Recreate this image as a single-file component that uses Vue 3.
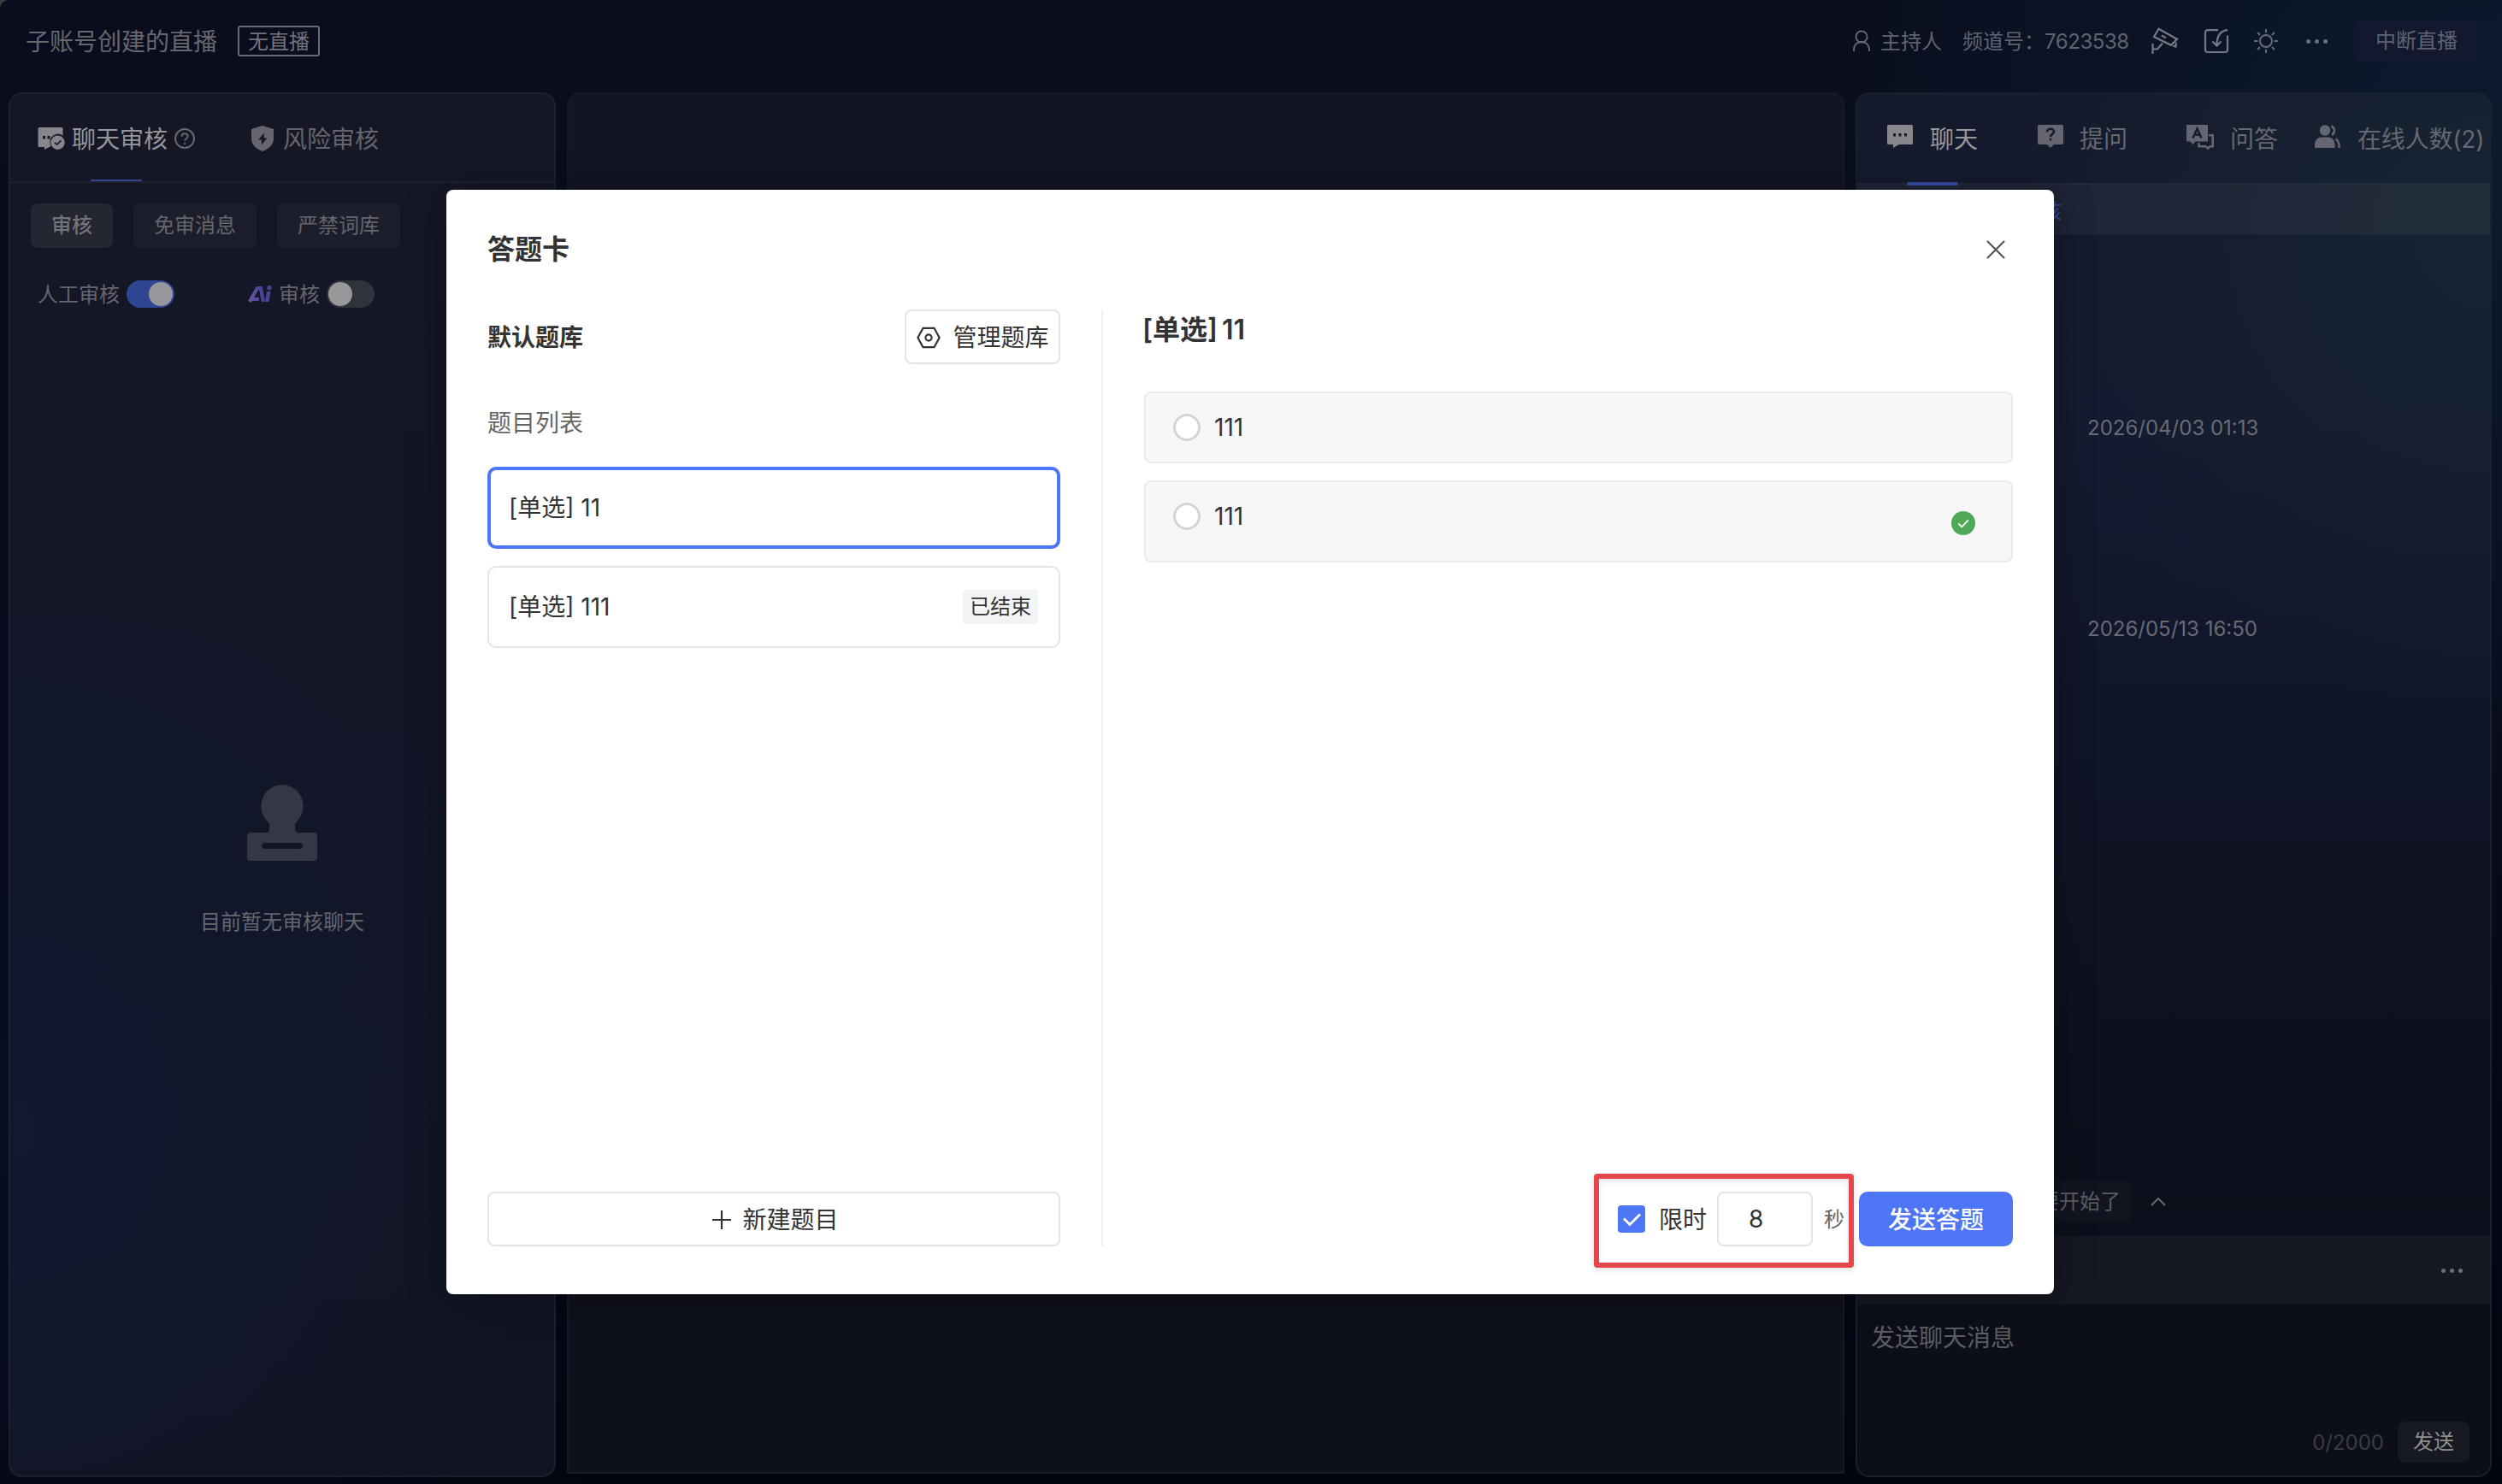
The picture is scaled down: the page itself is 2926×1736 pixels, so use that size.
<template>
  <div class="console">
    <header class="topbar">
      <h1 class="channel-name">子账号创建的直播</h1>
      <span class="live-state">无直播</span>
      <div class="topbar-right">
        <svg class="ic-host" viewBox="0 0 20 26" width="20" height="26">
          <circle cx="10" cy="8" r="6.6" />
          <path d="M1 25v-2.500c0-5 4-8.500 9-8.500s9 3.500 9 8.500V25" />
        </svg>
        <span class="host">主持人</span>
        <span class="channel-id">频道号：<i>7623538</i></span>
        <svg class="ic-line ic-camera" viewBox="0 0 32 32" width="32" height="32">
          <path d="M8.500 1.800 30 13.800l-7 7L3 11z" />
          <path d="m12 9.500 5 3" />
          <path d="M1.500 19v12M1.500 25.500h5.500l6-7M25 21.500l3.500 1 .5-5" />
        </svg>
        <svg class="ic-line ic-import" viewBox="0 0 30 30" width="30" height="30">
          <path d="M17 2.200H5a3 3 0 0 0-3 3V25a3 3 0 0 0 3 3h20a3 3 0 0 0 3-3V8.500" />
          <path d="M28 2.200C19 3 15.500 9 15.500 20M10.500 15.500l5 5 5-5" />
        </svg>
        <svg class="ic-line ic-sun" viewBox="0 0 28 28" width="28" height="28">
          <circle cx="14" cy="14" r="7" />
          <path d="M14 0v4.500M14 23.500V28M0 14h4.500M23.500 14H28M4 4l3 3M21 21l3 3M24 4l-3 3M7 21l-3 3" />
        </svg>
        <span class="dots"><b></b><b></b><b></b></span>
        <button class="btn-stop">中断直播</button>
      </div>
    </header>

    <main class="workspace">
      <section class="panel panel-audit">
        <nav class="audit-tabs">
          <div class="audit-tab active">
            <svg viewBox="0 0 32 28" width="32" height="28">
              <path class="solid" fill-rule="evenodd" d="M2 1h26a1.500 1.500 0 0 1 1.500 1.500v8.200a9.300 9.300 0 0 0-14.800 9.500A9.300 9.300 0 0 0 15.500 23L8 27v-3H2a1.500 1.500 0 0 1-1.500-1.500v-20A1.500 1.500 0 0 1 2 1zM6 11v3.400h3V11zm5.500 0v3.400h3V11z" />
              <path class="solid" fill-rule="evenodd" d="M23.500 10.500a8.200 8.200 0 1 1 0 16.400 8.200 8.200 0 0 1 0-16.400zm-4.200 8.600 3.300 3.200 5.400-5.300-1.200-1.200-4.200 4.100-2.100-2z" />
            </svg>
            <span>聊天审核</span>
            <svg class="ic-help" viewBox="0 0 24 24" width="24" height="24">
              <circle cx="12" cy="12" r="11" />
              <path d="M8.500 9.800c0-4.600 7.200-4.600 7.200-.3 0 2.800-3.700 2.600-3.700 5.300M12 17v2" />
            </svg>
          </div>
          <div class="audit-tab">
            <svg viewBox="0 0 28 30" width="28" height="30">
              <path class="solid" fill-rule="evenodd" d="M14 0l13 4v11c0 7.500-5.500 12-13 15C6.500 27 1 22.500 1 15V4zm1.800 8.500L9 16.400h4v5.800l6.500-7.800h-3.700z" />
            </svg>
            <span>风险审核</span>
          </div>
        </nav>
        <div class="pills">
          <button
            v-for="(name, i) in pills"
            :key="name"
            class="pill"
            :class="{ active: i === 0 }"
          >{{ name }}</button>
        </div>
        <div class="switches">
          <span class="sw-label">人工审核</span>
          <span class="switch on"></span>
          <svg class="ic-ai" viewBox="0 0 28 20" width="28" height="20">
            <defs>
              <linearGradient id="ai" x1="0" y1="0" x2="1" y2="0">
                <stop offset="0" stop-color="#66559a" />
                <stop offset="1" stop-color="#45409a" />
              </linearGradient>
            </defs>
            <g fill="none" stroke="url(#ai)" stroke-width="4.200">
              <path d="M2 19 11 3h4l3 16M4 16h9" />
            </g>
            <g fill="#4b4399">
              <path d="M22 7h4.500l-2 12H20z" />
              <circle cx="25" cy="2.800" r="2.700" />
            </g>
          </svg>
          <span class="sw-label">审核</span>
          <span class="switch"></span>
        </div>
        <div class="empty">
          <svg viewBox="0 0 82 90" width="82" height="90">
            <path fill-rule="evenodd" d="M41 0a25 25 0 0 1 17.500 42.500c-2 1.700-2.500 2.800-2.500 5V52q0 4 4 4h18a4 4 0 0 1 4 4v25a4 4 0 0 1-4 4H4a4 4 0 0 1-4-4V60a4 4 0 0 1 4-4h18q4 0 4-4v-4.500c0-2.200-.5-3.300-2.500-5A25 25 0 0 1 41 0zM20.500 68a3.500 3.500 0 0 0 0 7h41a3.500 3.500 0 0 0 0-7z" />
          </svg>
          <p>目前暂无审核聊天</p>
        </div>
      </section>

      <section class="panel panel-stage"></section>

      <section class="panel panel-chat">
        <nav class="chat-tabs">
          <div class="chat-tab active">
            <svg viewBox="0 0 30 28" width="30" height="28">
              <path class="solid" fill-rule="evenodd" d="M1.500 0h27A1.500 1.500 0 0 1 30 1.500v20a1.500 1.500 0 0 1-1.500 1.500H14l-7 4v-4H1.500A1.500 1.500 0 0 1 0 21.500v-20A1.500 1.500 0 0 1 1.500 0zM7 10v3.400h3V10zm6.500 0v3.400h3V10zm6.500 0v3.400h3V10z" />
            </svg>
            <span>聊天</span>
          </div>
          <div class="chat-tab tab-ask">
            <svg viewBox="0 0 30 28" width="30" height="28">
              <path class="solid" d="M1.500 0h27A1.500 1.500 0 0 1 30 1.500v20a1.500 1.500 0 0 1-1.500 1.500H19l-4 4-4-4H1.500A1.500 1.500 0 0 1 0 21.500v-20A1.500 1.500 0 0 1 1.500 0z" />
              <path class="cut" d="M11 8.500c0-5 8-5 8-.5 0 3-4 2.800-4 6M15 15.800v2.800" />
            </svg>
            <span>提问</span>
          </div>
          <div class="chat-tab tab-qa">
            <svg viewBox="0 0 33 30" width="33" height="30">
              <path class="solid" d="M1 1h25v19.500H11.500l-3 3.500-3-3.500H1z" />
              <path class="cut" d="m8.500 16.500 5-11 5 11M10.500 12.800h6" />
              <path class="edge" d="M27 13.200h4.700v13h-3.200l-2.500 2.500-2.500-2.500h-8v-4" />
            </svg>
            <span>问答</span>
          </div>
          <div class="chat-tab tab-online">
            <svg viewBox="0 0 30 28" width="30" height="28">
              <circle class="solid" cx="12" cy="6.500" r="6.200" />
              <path class="solid" d="M0 27v-4.500a8 8 0 0 1 8-8h7.500a8 8 0 0 1 8 8V27z" />
              <path class="edge" d="M19.500 1.500c4.500 2.500 4.500 7.500.5 10.500M24.500 16.500c3.500 2.500 4.300 6 4 10.500" />
            </svg>
            <span>在线人数(2)</span>
          </div>
        </nav>
        <div class="notice">审核</div>
        <div class="messages">
          <time>2026/04/03 01:13</time>
          <time>2026/05/13 16:50</time>
        </div>
        <div class="quick-row">
          <span class="quick">要开始了</span>
          <svg viewBox="0 0 18 10" width="18" height="10"><path d="m1 9 8-8 8 8" /></svg>
        </div>
        <div class="toolbar"><span class="dots"><b></b><b></b><b></b></span></div>
        <div class="composer">
          <p>发送聊天消息</p>
          <div class="composer-foot">
            <span class="count">0/2000</span>
            <button class="btn-send">发送</button>
          </div>
        </div>
      </section>
    </main>

    <div class="modal">
      <div class="modal-head">
        <h2>答题卡</h2>
        <svg viewBox="0 0 22 22" width="22" height="22"><path d="m1 1 20 20M21 1 1 21" /></svg>
      </div>
      <div class="modal-body">
        <div class="bank">
          <div class="bank-head">
            <h3>默认题库</h3>
            <button class="btn-line btn-manage">
              <svg viewBox="0 0 28 26" width="28" height="26">
                <path d="M7.500 1.800h13L26.600 13l-6.100 11.200h-13L1.400 13z" />
                <circle cx="14" cy="13" r="3.600" />
              </svg>
              管理题库
            </button>
          </div>
          <p class="list-label">题目列表</p>
          <div
            v-for="q in questions"
            :key="q.title"
            class="question"
            :class="{ active: q.title === current }"
          >
            <span>[单选] {{ q.title }}</span>
            <em v-if="q.ended">已结束</em>
          </div>
          <button class="btn-line btn-new">
            <svg viewBox="0 0 24 24" width="24" height="24"><path d="M12 1v22M1 12h22" /></svg>
            新建题目
          </button>
        </div>

        <div class="detail">
          <h3 class="detail-title">[单选] {{ current }}</h3>
          <div v-for="(o, i) in options" :key="i" class="option" :class="{ correct: o.correct }">
            <span class="radio"></span>
            <span>{{ o.text }}</span>
            <svg v-if="o.correct" viewBox="0 0 28 28" width="28" height="28">
              <circle cx="14" cy="14" r="14" />
              <path d="m8.200 14.300 4 4 7.600-7.800" />
            </svg>
          </div>
          <div class="actions">
            <div class="limit">
              <span class="check">
                <svg viewBox="0 0 32 32" width="32" height="32"><path d="m7 15.500 7 7 12-12" /></svg>
              </span>
              <span class="limit-label">限时</span>
              <span class="seconds">{{ seconds }}</span>
              <span class="unit">秒</span>
            </div>
            <button class="btn-primary">发送答题</button>
          </div>
        </div>
      </div>
    </div>
  </div>
</template>

<script setup>
import { ref } from 'vue'

const pills = ['审核', '免审消息', '严禁词库']
const questions = [
  { title: '11', ended: false },
  { title: '111', ended: true },
]
const options = [
  { text: '111', correct: false },
  { text: '111', correct: true },
]
const current = ref('11')
const seconds = ref(8)
</script>

<style>
html, body { margin:0; background:#3b3a36; }
</style>

<style scoped>
* { box-sizing:border-box; margin:0; padding:0; }
svg { display:block; flex-shrink:0; }
button { border:0; font-family:inherit; color:inherit; display:flex; align-items:center; justify-content:center; }
i, em { font-style:normal; }
h1, h2, h3, p, span, button, time { line-height:1; white-space:nowrap; }

.console {
  position:relative; width:2926px; height:1736px; overflow:hidden;
  display:flex; flex-direction:column; border-top-left-radius:10px;
  background:
    radial-gradient(900px 800px at 100% 10%, #0c1a2e 0%, rgba(12,26,46,0) 100%),
    radial-gradient(800px 900px at 0 75%, #080d24 0%, rgba(8,13,36,0) 100%),
    linear-gradient(180deg, #0a0d1d 0%, #080b1c 45%, #03050e 100%);
  font-family:Inter,"Noto Sans CJK SC",sans-serif; font-size:24px; color:#65666e;
}

/* top bar */
.topbar { height:108px; padding:0 28px 12px 30px; display:flex; align-items:center; }
.channel-name { font-size:28px; font-weight:400; color:#67686d; padding-top:1px; }
.live-state {
  margin-left:24px; height:36px; width:96px; border:2px solid #686a72; border-radius:3px; padding-top:1px;
  display:flex; align-items:center; justify-content:center; color:#73747b;
}
.topbar-right { margin-left:auto; display:flex; align-items:center; color:#5f6370; }
.ic-host { fill:none; stroke:#6a6d78; stroke-width:1.8; }
.host { margin-left:12px; padding-top:1px; }
.channel-id { margin-left:24px; width:197px; padding-top:1px; }
.channel-id i { letter-spacing:-.45px; }
.ic-line { fill:none; stroke:#777a84; stroke-width:2.200; }
.ic-camera { margin-left:24px; }
.ic-import { margin-left:29px; }
.ic-sun { margin-left:29px; margin-right:1px; stroke:#696c78; stroke-width:2; }
.dots { display:flex; gap:5px; }
.dots b { width:5px; height:5px; border-radius:50%; background:#6c6e77; }
.topbar .dots { margin-left:32px; }
.btn-stop { margin-left:32px; width:144px; height:48px; border-radius:4px; background:#13182f; font-size:24px; }

/* panels */
.workspace { flex:1; min-height:0; display:flex; align-items:flex-start; padding-left:10px; gap:13px; }
.panel { border:2px solid #1d202d; border-radius:16px; height:1620px; display:flex; flex-direction:column; overflow:hidden; }
.panel-audit {
  width:640px;
  background:
    radial-gradient(640px 700px at 0 75%, #11182f 0%, rgba(17,24,47,0) 100%),
    linear-gradient(180deg, #151725 0%, #131628 50%, #111422 100%);
}
.panel-stage {
  width:1494px; height:1616px; border-bottom-left-radius:2px; border-bottom-right-radius:2px; border-color:#181a25;
  background:linear-gradient(180deg, #131523 0%, #10131f 50%, #0e101b 100%);
}
.panel-chat {
  width:744px; border-color:#1a2030;
  background:
    radial-gradient(560px 560px at 100% 10%, #172433 0%, rgba(23,36,51,0) 100%),
    linear-gradient(180deg, #151a2d 0%, #141a30 22%, #11152a 45%, #0d111d 70%, #0c0e18 100%);
}

.audit-tabs { height:104px; border-bottom:2px solid #20222e; display:flex; padding:0 0 0 32px; flex-shrink:0; }
.audit-tab { position:relative; display:flex; align-items:center; gap:10px; font-size:28px; color:#64656c; }
.audit-tab span { padding-top:3px; }
.audit-tab svg { position:relative; top:1px; }
.audit-tab + .audit-tab { margin-left:65px; }
.audit-tab.active { color:#96969a; gap:8px; }
.audit-tab.active::after { content:''; position:absolute; left:62px; bottom:0; width:60px; height:2px; background:#2e4693; }
.audit-tab .solid { fill:#66666f; }
.audit-tab.active .solid { fill:#87878b; }
.ic-help { fill:none; stroke:#66676f; stroke-width:2; }
.pills { display:flex; gap:24px; padding:24px 0 0 24px; }
.pill { height:52px; padding:0 24px; border-radius:8px; background:#1c1e2b; font-size:24px; color:#65666c; }
.pill.active { background:#242632; font-weight:500; color:#73747a; }
.switches { display:flex; align-items:center; padding:38px 0 0 32px; }
.sw-label { padding-top:1px; }
.switch { margin-left:8px; width:56px; height:32px; border-radius:16px; background:#2f333c; padding:2px; display:flex; }
.switch::after { content:''; width:28px; height:28px; border-radius:50%; background:#98989a; }
.switch.on { background:#2e4694; justify-content:flex-end; }
.ic-ai { margin-left:86px; margin-right:8px; }
.empty { display:flex; flex-direction:column; align-items:center; margin-top:558px; }
.empty svg { fill:#353744; }
.empty p { margin-top:59px; color:#66676e; }

/* chat panel */
.chat-tabs { height:104px; display:flex; padding-left:35px; flex-shrink:0; }
.chat-tab { position:relative; display:flex; align-items:center; gap:20px; font-size:28px; color:#66676f; }
.chat-tab span { padding-top:2px; }
.chat-tab svg { position:relative; top:-2px; }
.chat-tab.active { color:#98989b; }
.chat-tab.active::after { content:''; position:absolute; left:23px; bottom:-3px; width:60px; height:4px; border-radius:2px; background:#2e4693; z-index:1; }
.chat-tab .solid { fill:#666670; }
.chat-tab.active .solid { fill:#88888c; }
.cut { fill:none; stroke:#171c31; stroke-width:2.600; }
.edge { fill:none; stroke:#666670; stroke-width:2.600; }
.tab-ask { margin-left:70px; gap:19px; }
.tab-qa { margin-left:68px; gap:19px; }
.tab-online { margin-left:43px; }
.tab-online span { letter-spacing:-.2px; }
.notice {
  height:60px; padding-left:191px; display:flex; align-items:center; flex-shrink:0;
  background:rgba(255,255,255,.045); border-top:2px solid rgba(255,255,255,.02); color:#2e4693; font-size:24px;
}
.messages { height:1108px; padding:215px 0 0 269px; display:flex; flex-direction:column; gap:211px; color:#696b73; }
.quick-row { display:flex; align-items:center; height:48px; }
.quick { width:320px; height:48px; padding-right:12px; border-radius:4px; background:#12151f; display:flex; align-items:center; justify-content:flex-end; color:#5c5e65; }
.quick-row svg { margin-left:23px; fill:none; stroke:#6b6c73; stroke-width:2; }
.toolbar { margin-top:16px; height:80px; background:#151722; display:flex; align-items:center; justify-content:flex-end; padding-right:32px; flex-shrink:0; }
.composer { flex:1; display:flex; flex-direction:column; padding:25px 24px 15px 16px; }
.composer p { font-size:28px; color:#5d5e63; }
.composer-foot { margin-top:auto; display:flex; align-items:center; justify-content:flex-end; }
.count { color:#3a3c43; padding-top:1px; }
.btn-send { margin-left:16px; width:84px; height:48px; border-radius:8px; background:#171922; font-size:24px; color:#8f8f8e; }

/* quiz dialog */
.modal {
  position:absolute; left:522px; top:222px; width:1880px; height:1292px; border-radius:8px;
  background:#fff; color:#333; box-shadow:0 4px 48px rgba(0,0,0,.3);
  padding:48px 48px 56px; display:flex; flex-direction:column; font-size:28px;
}
.modal-head { height:44px; display:flex; align-items:center; justify-content:space-between; padding-right:9px; }
.modal-head h2 { font-size:32px; font-weight:600; }
.modal-head svg { fill:none; stroke:#555; stroke-width:2.200; }
.modal-body { flex:1; margin-top:48px; display:flex; }
.bank { width:720px; padding-right:48px; border-right:2px solid #efefef; display:flex; flex-direction:column; }
.bank-head { height:64px; display:flex; align-items:center; justify-content:space-between; }
.bank-head h3 { font-size:28px; font-weight:600; padding-top:1px; }
.btn-line { height:64px; border:2px solid #e4e4e4; border-radius:8px; background:#fff; font-size:28px; gap:14px; padding-top:1px; }
.btn-line svg { fill:none; stroke:#333; stroke-width:2.200; }
.btn-manage { width:182px; padding-left:1px; }
.list-label { margin:55px 0 37px; color:#666; }
.question {
  height:96px; margin-bottom:20px; padding:0 24px 0 23px; border:2px solid #e4e4e4; border-radius:10px;
  display:flex; align-items:center; justify-content:space-between;
}
.question.active { border:4px solid #4d75f5; padding-left:21px; }
.question em { width:88px; height:40px; border-radius:4px; background:#f2f3f5; font-size:24px; line-height:40px; text-align:center; }
.btn-new { margin-top:auto; gap:12px; padding-left:3px; }
.detail { flex:1; padding-left:48px; display:flex; flex-direction:column; }
.detail-title { font-size:32px; font-weight:600; margin:8px 0 56px -2px; word-spacing:-3px; }
.option {
  height:84px; margin-bottom:20px; padding:24px 42px 0 32px; border:2px solid #ebebeb; border-radius:8px;
  background:#f7f7f7; display:flex; align-items:flex-start;
}
.option.correct { height:96px; }
.option span { line-height:32px; }
.radio { width:32px; height:32px; margin-right:16px; border:3px solid #d0d4db; border-radius:50%; background:#fff; }
.option svg { margin:10px 0 0 auto; fill:#4fa857; }
.option svg path { fill:none; stroke:#fff; stroke-width:1.8; }
.actions { margin-top:auto; height:64px; display:flex; align-items:center; justify-content:flex-end; }
.limit { position:relative; display:flex; align-items:center; margin-right:17px; }
/* highlight frame around the time limit */
.limit::before {
  content:''; position:absolute; left:-28px; top:-21px; right:-11px; bottom:-25px;
  border:6px solid #e5484c; border-radius:4px; box-shadow:0 3px 6px rgba(0,0,0,.12), inset 0 3px 6px rgba(0,0,0,.1);
}
.check { width:32px; height:32px; border-radius:4px; background:#4d75f5; }
.check svg { fill:none; stroke:#fff; stroke-width:3; }
.limit-label { margin-left:16px; padding-top:1px; }
.seconds { margin-left:12px; width:112px; height:64px; border:2px solid #e4e4e4; border-radius:8px; padding-left:35px; line-height:60px; }
.unit { margin-left:13px; color:#666; font-size:24px; padding-top:1px; }
.btn-primary { width:180px; height:64px; border-radius:10px; background:#4d75f5; color:#fff; font-size:28px; font-weight:500; padding-top:1px; }
</style>
